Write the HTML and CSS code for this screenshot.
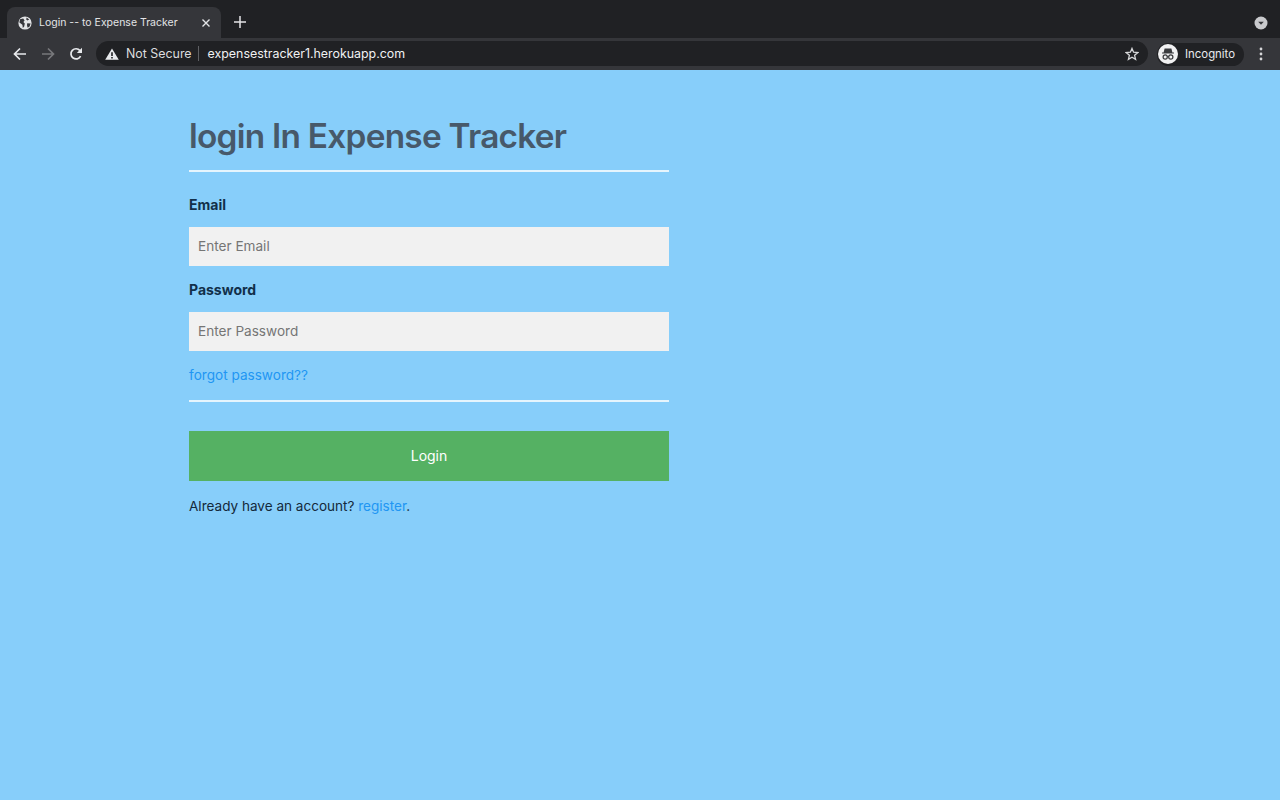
FILE: index.html
```html
<!DOCTYPE html>
<html lang="en">
<head>
<meta charset="utf-8">
<title>Login -- to Expense Tracker</title>
<link rel="stylesheet" href="styles.css">
</head>
<body>
<header class="browser">
  <div class="tabstrip">
    <div class="tab">
      <svg class="globe" viewBox="0 0 14 14" width="14" height="14"><circle cx="7" cy="7" r="6.6" fill="#e3e4e6"/><path d="M2 3.2 5.2 2.6 6.6 4.4 5.4 6 6.8 7.6 6.2 10.4 4.8 12 4.4 8.8 1.4 6.6ZM8.6 1.6 11.2 3.4 9.4 4.6 8.2 3.4ZM9.2 7.2 12.6 7.4 11.6 10.6 9.6 11.8 9 9.2Z" fill="#35363a"/></svg>
      <span class="tab-title">Login -- to Expense Tracker</span>
      <svg class="tab-close" viewBox="0 0 10 10" width="10" height="10"><path d="M1.5 1.5 8.5 8.5M8.5 1.5 1.5 8.5" stroke="#e3e4e6" stroke-width="1.4"/></svg>
    </div>
    <svg class="new-tab" viewBox="0 0 12 12" width="12" height="12"><path d="M6 0V12M0 6H12" stroke="#e3e4e6" stroke-width="1.5"/></svg>
    <svg class="tab-search" viewBox="0 0 14 14" width="14" height="14"><circle cx="7" cy="7" r="6.5" fill="#c9cacd"/><path d="M4.2 5.8H9.8L7 8.8Z" fill="#35363a"/></svg>
  </div>
  <div class="toolbar">
    <svg class="nav-icon" viewBox="0 0 14 14" width="14" height="14"><path d="M13 7H2M7 1.5 1.5 7 7 12.5" fill="none" stroke="#e8eaed" stroke-width="1.7"/></svg>
    <svg class="nav-icon" viewBox="0 0 14 14" width="14" height="14"><path d="M1 7H12M7 1.5 12.5 7 7 12.5" fill="none" stroke="#77787b" stroke-width="1.7"/></svg>
    <svg class="nav-icon" viewBox="0 0 14 14" width="14" height="14"><path d="M11.6 9.2A5.1 5.1 0 1 1 11 3.6" fill="none" stroke="#e8eaed" stroke-width="1.7"/><path d="M13 .8V6H7.8Z" fill="#e8eaed"/></svg>
    <div class="omnibox">
      <svg class="warn" viewBox="0 0 14 12" width="14" height="12"><path d="M7 .4 13.8 11.8H.2Z" fill="#e8eaed"/><path d="M6.2 4.2H7.8V8H6.2ZM6.2 9H7.8V10.4H6.2Z" fill="#202124"/></svg>
      <span class="not-secure">Not Secure</span>
      <span class="omni-sep"></span>
      <span class="url">expensestracker1.herokuapp.com</span>
      <svg class="star" viewBox="0 0 14 14" width="14" height="14"><path d="M7 1.4 8.6 5.2 12.8 5.6 9.6 8.3 10.6 12.4 7 10.2 3.4 12.4 4.4 8.3 1.2 5.6 5.4 5.2Z" fill="none" stroke="#d6d7d9" stroke-width="1.3"/></svg>
    </div>
    <div class="profile">
      <svg viewBox="0 0 20 20" width="20" height="20"><circle cx="10" cy="10" r="10" fill="#f1f1f2"/><path d="M6.6 4.6H13.4L14.4 8.4H16V9.4H4V8.4H5.6Z" fill="#3a3b3e"/><circle cx="7.2" cy="13" r="2.1" fill="none" stroke="#3a3b3e" stroke-width="1.2"/><circle cx="12.8" cy="13" r="2.1" fill="none" stroke="#3a3b3e" stroke-width="1.2"/><path d="M9.2 12.6H10.8" stroke="#3a3b3e" stroke-width="1"/></svg>
      <span class="profile-name">Incognito</span>
    </div>
    <svg class="menu" viewBox="0 0 4 14" width="4" height="14"><circle cx="2" cy="2" r="1.4" fill="#d6d7d9"/><circle cx="2" cy="7" r="1.4" fill="#d6d7d9"/><circle cx="2" cy="12" r="1.4" fill="#d6d7d9"/></svg>
  </div>
</header>
<main class="page">
  <form class="login">
    <h1 class="title">login In Expense Tracker</h1>
    <hr class="rule">
    <label class="field-label" for="email">Email</label>
    <input class="field" id="email" type="text" placeholder="Enter Email">
    <label class="field-label" for="psw">Password</label>
    <input class="field" id="psw" type="password" placeholder="Enter Password">
    <a class="link forgot" href="#">forgot password??</a>
    <hr class="rule rule-lower">
    <button class="submit" type="button">Login</button>
    <p class="signin">Already have an account? <a class="link" href="#">register</a>.</p>
  </form>
</main>
</body>
</html>
```
FILE: styles.css
```css
* { box-sizing: border-box; }
html, body { margin: 0; height: 100%; }
body {
  display: flex;
  flex-direction: column;
  height: 800px;
  overflow: hidden;
  background: #87cefa;
  font-family: Inter, "Liberation Sans", sans-serif;
}
.browser { height: 70px; flex: none; background: #35363a; }
.tabstrip {
  height: 38px;
  padding: 7px 12px 0 7px;
  display: flex;
  align-items: center;
  background: #202124;
}
.tab {
  width: 214px;
  height: 31px;
  padding: 0 10px 0 11px;
  display: flex;
  align-items: center;
  background: #35363a;
  border-radius: 8px 8px 0 0;
}
.tab-title {
  margin-left: 7px;
  flex: 1;
  font-size: 10.5px;
  color: #e3e4e6;
  white-space: nowrap;
}
.new-tab { margin-left: 13px; margin-bottom: 1px; }
.tab-search { margin-left: auto; }
.toolbar {
  height: 32px;
  padding: 0 15px 0 13px;
  display: flex;
  align-items: center;
}
.nav-icon { margin-right: 14px; flex: none; }
.omnibox {
  width: 1052px;
  height: 25px;
  margin-left: -1px;
  margin-top: -1px;
  padding: 0 9px 0 9px;
  display: flex;
  align-items: center;
  background: #202124;
  border-radius: 13px;
}
.not-secure { margin-left: 7px; font-size: 12.4px; color: #dcdddf; }
.omni-sep { width: 1px; height: 15px; margin: 0 9px 0 6px; background: #5f6064; }
.url { flex: 1; font-size: 12.4px; color: #f1f2f3; }
.profile {
  width: 87px;
  height: 23px;
  margin-left: 9px;
  padding-left: 1px;
  display: flex;
  align-items: center;
  background: #202124;
  border-radius: 12px;
}
.profile-name { margin-left: 7px; font-size: 11.4px; color: #e8eaed; }
.menu { margin-left: 15px; }
.page { flex: 1; padding: 44px 0 0 189px; }
.login { width: 480px; display: flex; flex-direction: column; align-items: stretch; }
.title {
  margin: 0;
  height: 42px;
  font-size: 33.4px;
  line-height: 44px;
  font-weight: 560;
  letter-spacing: -0.75px;
  color: #47596a;
}
.rule { width: 100%; height: 2px; margin: 14px 0 0; border: 0; background: #e6f5fd; }
.rule-lower { margin-top: 16px; }
.field-label {
  margin-top: 24px;
  height: 17px;
  font-size: 14px;
  line-height: 17px;
  font-weight: 700;
  color: #12304a;
}
.field {
  height: 39px;
  margin-top: 14px;
  padding: 0 9px 2px;
  border: 0;
  border-radius: 0;
  background: #f1f1f1;
  font-family: inherit;
  font-size: 13.6px;
}
.field::placeholder { color: #757575; opacity: 1; }
.field + .field-label { margin-top: 15px; }
.link { color: #2196f3; text-decoration: none; }
.forgot { margin-top: 16px; height: 17px; font-size: 13.6px; line-height: 17px; }
.submit {
  height: 50px;
  margin-top: 29px;
  padding: 0 0 2px;
  border: 0;
  background: #55b163;
  color: #fff;
  font-family: inherit;
  font-size: 14px;
}
.signin { margin: 17px 0 0; font-size: 13.55px; line-height: 17px; color: #14293b; }
```
